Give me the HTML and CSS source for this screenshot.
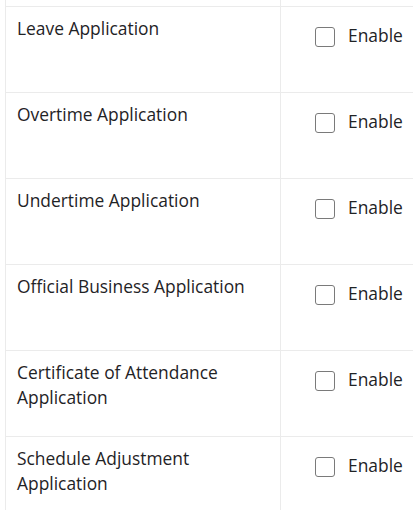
FILE: index.html
```html
<!DOCTYPE html>
<html>
<head>
<meta charset="utf-8">
<link rel="stylesheet" href="styles.css">
</head>
<body>
<div class="table">
  <div class="row partial"><div class="name"></div><div class="opt"></div></div>
  <div class="row"><div class="name">Leave Application</div><div class="opt"><label class="check"><input type="checkbox"><span>Enable</span></label></div></div>
  <div class="row"><div class="name">Overtime Application</div><div class="opt"><label class="check"><input type="checkbox"><span>Enable</span></label></div></div>
  <div class="row"><div class="name">Undertime Application</div><div class="opt"><label class="check"><input type="checkbox"><span>Enable</span></label></div></div>
  <div class="row"><div class="name">Official Business Application</div><div class="opt"><label class="check"><input type="checkbox"><span>Enable</span></label></div></div>
  <div class="row"><div class="name">Certificate of Attendance Application</div><div class="opt"><label class="check"><input type="checkbox"><span>Enable</span></label></div></div>
  <div class="row"><div class="name">Schedule Adjustment Application</div><div class="opt"><label class="check"><input type="checkbox"><span>Enable</span></label></div></div>
</div>
</body>
</html>
```
FILE: styles.css
```css
html, body {
  margin: 0;
  padding: 0;
  background: #fff;
}
body {
  font-family: "Open Sans", "Noto Sans", sans-serif;
  font-size: 17.4px;
  color: #1f2326;
  overflow: hidden;
}
.table {
  margin-left: 5px;
  border-left: 1px solid #ebebeb;
  width: 430px;
}
.row {
  display: grid;
  grid-template-columns: 275px 1fr;
  height: 86px;
  box-sizing: border-box;
  border-top: 1px solid #ebebeb;
}
.row.partial {
  height: 6px;
  border-top: none;
}
.name {
  border-right: 1px solid #ebebeb;
  padding: 9px 12px 0 11px;
  line-height: 25px;
}
.opt {
  padding: 18px 0 0 34px;
}
.check {
  display: flex;
  align-items: center;
  gap: 13px;
  line-height: 20px;
}
.check span {
  margin-bottom: 4px;
}
.check input {
  appearance: none;
  -webkit-appearance: none;
  margin: 0;
  width: 20px;
  height: 20px;
  border: 1.5px solid #7a7a7a;
  border-radius: 3px;
  background: #fff;
  box-sizing: border-box;
}
```
